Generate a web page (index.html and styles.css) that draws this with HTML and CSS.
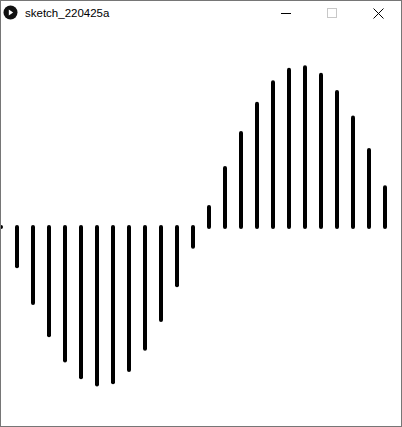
FILE: index.html
```html
<!DOCTYPE html>
<html lang="en">
<head>
<meta charset="utf-8">
<title>sketch_220425a</title>
<link rel="stylesheet" href="styles.css">
</head>
<body>
<div class="window">
  <div class="titlebar">
    <svg class="app-icon" width="15" height="15" viewBox="0 0 15 15">
      <circle cx="7.5" cy="7.5" r="7" fill="#111"/>
      <path d="M5.8 4.6 L10.2 7.5 L5.8 10.4 Z" fill="#fff"/>
    </svg>
    <span class="title">sketch_220425a</span>
    <div class="controls">
      <div class="btn"><svg width="10" height="10" viewBox="0 0 10 10"><line x1="0" y1="5.5" x2="10" y2="5.5" stroke="#000" stroke-width="1"/></svg></div>
      <div class="btn"><svg width="10" height="10" viewBox="0 0 10 10"><rect x="0.5" y="0.5" width="9" height="9" fill="none" stroke="#c8c8c8" stroke-width="1"/></svg></div>
      <div class="btn"><svg width="11" height="11" viewBox="0 0 11 11"><path d="M0.5 0.5 L10.5 10.5 M10.5 0.5 L0.5 10.5" stroke="#000" stroke-width="1" fill="none"/></svg></div>
    </div>
  </div>
  <svg class="canvas" width="400" height="399" viewBox="0 0 400 399">
    <g stroke="#000" stroke-width="4" stroke-linecap="round">
      <line x1="16" y1="200" x2="16" y2="239.3"/>
      <line x1="32" y1="200" x2="32" y2="276.1"/>
      <line x1="48" y1="200" x2="48" y2="308.2"/>
      <line x1="64" y1="200" x2="64" y2="333.4"/>
      <line x1="80" y1="200" x2="80" y2="350.3"/>
      <line x1="96" y1="200" x2="96" y2="357.5"/>
      <line x1="112" y1="200" x2="112" y2="355.2"/>
      <line x1="128" y1="200" x2="128" y2="343.0"/>
      <line x1="144" y1="200" x2="144" y2="321.7"/>
      <line x1="160" y1="200" x2="160" y2="292.9"/>
      <line x1="176" y1="200" x2="176" y2="258.2"/>
      <line x1="192" y1="200" x2="192" y2="219.8"/>
      <line x1="208" y1="200" x2="208" y2="180.0"/>
      <line x1="224" y1="200" x2="224" y2="141.1"/>
      <line x1="240" y1="200" x2="240" y2="106.0"/>
      <line x1="256" y1="200" x2="256" y2="76.7"/>
      <line x1="272" y1="200" x2="272" y2="55.2"/>
      <line x1="288" y1="200" x2="288" y2="42.8"/>
      <line x1="304" y1="200" x2="304" y2="40.3"/>
      <line x1="320" y1="200" x2="320" y2="47.8"/>
      <line x1="336" y1="200" x2="336" y2="64.9"/>
      <line x1="352" y1="200" x2="352" y2="90.5"/>
      <line x1="368" y1="200" x2="368" y2="122.9"/>
      <line x1="384" y1="200" x2="384" y2="160.2"/>
    </g>
    <circle cx="0" cy="200" r="2" fill="#000"/>
  </svg>
</div>
</body>
</html>
```
FILE: styles.css
```css
* { box-sizing: border-box; }
html, body { margin: 0; padding: 0; background: #fff; }
.window {
  width: 402px;
  height: 427px;
  border: 1px solid #767676;
  background: #fff;
  display: flex;
  flex-direction: column;
  overflow: hidden;
}
.titlebar {
  height: 26px;
  display: flex;
  align-items: flex-start;
  flex-shrink: 0;
}
.app-icon {
  display: block;
  margin: 4px 0 0 2px;
}
.title {
  font-family: "Liberation Sans", Arial, sans-serif;
  font-size: 11.5px;
  line-height: 14px;
  color: #000;
  margin: 5px 0 0 7px;
}
.controls {
  margin-left: auto;
  display: flex;
}
.btn {
  width: 46px;
  height: 26px;
  display: flex;
  align-items: center;
  justify-content: center;
  padding-bottom: 2px;
}
.btn svg { display: block; }
.canvas { display: block; }
```
